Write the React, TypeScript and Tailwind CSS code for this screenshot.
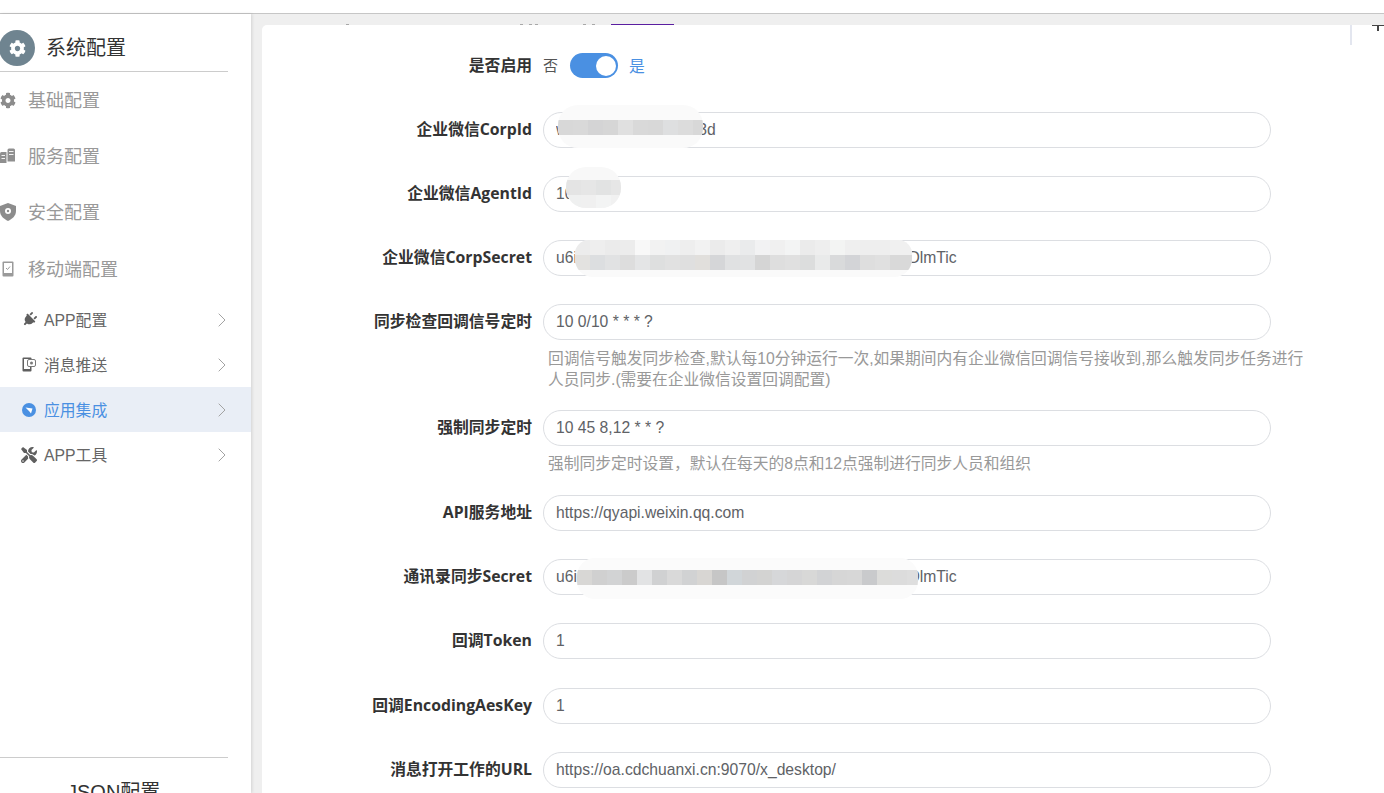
import React, { ReactNode } from "react";
import { FaCog, FaPlug, FaTools } from "react-icons/fa";

const ServerIcon = () => (
  <svg width="16" height="16" viewBox="0 0 16 16" fill="#8f8f8f">
    <path d="M0 5.5Q0 4 1.5 4H6.5V15H0z" />
    <path d="M7.5 2Q7.5 0.5 9 0.5H13.5Q15 0.5 15 2V13.5H7.5z" />
    <path d="M1.5 7h3.5v1H1.5zM1.5 10h3.5v1H1.5zM9 3h4.5v1H9zM9 6h4.5v1H9z" fill="#f2f2f2" />
  </svg>
);

const ShieldIcon = () => (
  <svg width="16" height="18" viewBox="0 0 16 18" fill="#8c8c8c">
    <path d="M8 0l8 3v5c0 5-4 8-8 10C4 16 0 13 0 8V3z" />
    <circle cx="8" cy="8" r="3" fill="#fff" />
    <circle cx="8" cy="8" r="1.2" />
  </svg>
);

const PhoneCheckIcon = () => (
  <svg width="12" height="16" viewBox="0 0 12 16" fill="none">
    <rect x="0.5" y="0.5" width="11" height="15" rx="1" fill="#9a9a9a" />
    <rect x="2" y="2" width="8" height="10" fill="#fff" />
    <path d="M4 7l1.5 1.5L8 5.5" stroke="#9a9a9a" />
  </svg>
);

const PushIcon = () => (
  <svg width="14" height="15" viewBox="0 0 14 15" fill="none">
    <rect x="0.5" y="0.5" width="9" height="14" rx="1" fill="#5f5f5f" />
    <rect x="2" y="2" width="6" height="10" fill="#fff" />
    <rect x="5.5" y="2.5" width="8" height="7" rx="1.5" fill="#fff" stroke="#7a7a7a" />
    <circle cx="9.5" cy="6" r="1.5" fill="#7a7a7a" />
  </svg>
);

const ArrowDiscIcon = () => (
  <svg width="14" height="14" viewBox="0 0 14 14">
    <circle cx="7" cy="7" r="7" fill="#4a90e2" />
    <path d="M3.5 4.5L10.5 5.5L9 10.5L7 8z" fill="#fff" />
  </svg>
);

const Chevron = () => (
  <svg width="8" height="14" viewBox="0 0 8 14" fill="none" stroke="#a3a3a3" strokeWidth="1">
    <path d="M0.7 0.7L7 7L0.7 13.3" />
  </svg>
);

const mainMenu: { icon: ReactNode; text: string; extra?: string }[] = [
  { icon: <FaCog size={17} color="#8c8c8c" />, text: "基础配置" },
  { icon: <ServerIcon />, text: "服务配置" },
  { icon: <ShieldIcon />, text: "安全配置" },
  { icon: <PhoneCheckIcon />, text: "移动端配置", extra: "mt-px" },
];

const subMenu: { icon: ReactNode; text: string; active?: boolean }[] = [
  { icon: <FaPlug size={15} color="#5f5f5f" className="rotate-45" />, text: "APP配置" },
  { icon: <PushIcon />, text: "消息推送" },
  { icon: <ArrowDiscIcon />, text: "应用集成", active: true },
  { icon: <FaTools size={16} color="#5f5f5f" />, text: "APP工具" },
];

const Mosaic = ({ colors }: { colors: string[] }) => (
  <div className="flex h-[15px]">
    {colors.map((c, i) => (
      <div key={i} className="w-[15px] h-full shrink-0" style={{ backgroundColor: c }} />
    ))}
  </div>
);

const Field = ({
  label,
  value,
  hint,
  cover,
  className,
}: {
  label: string;
  value: string;
  hint?: ReactNode;
  cover?: ReactNode;
  className?: string;
}) => (
  <div className={`flex ${className ?? ""}`}>
    <div className="w-[270px] h-9 shrink-0 flex items-center justify-end text-[15.8px] leading-none font-bold text-[#333] font-['Open_Sans','Noto_Sans_CJK_SC',sans-serif]">
      {label}
    </div>
    <div className="ml-[11px] w-[728px]">
      <div className="relative h-9">
        <input
          readOnly
          value={value}
          className="w-full h-9 px-3 rounded-[18px] border border-[#dcdee2] text-[15.7px] text-[#606266] outline-none bg-white"
        />
        {cover}
      </div>
      {hint}
    </div>
  </div>
);

const lightRowA = ["#ececec", "#eeeeee", "#ebebeb", "#ececec", "#f8f8f8", "#f2f2f2", "#f0f1f2", "#eeeeee", "#f2f2f2", "#ebebeb", "#efefef", "#eaebec", "#f2f2f3", "#f0f0f0", "#f3f4f4", "#ebebeb", "#eeeeee", "#f3f4f3", "#efefef", "#eeeeee", "#eeeeee", "#f0f0f0", "#f0f0f0"];
const lightRowB = ["#e3e2e0", "#dcdee0", "#e1e2e3", "#dddddd", "#e4e5e6", "#dedfdf", "#e1e1e1", "#dfdfdf", "#e1dfdc", "#d5d6d8", "#e0e1e2", "#e1e2e3", "#d5d5d5", "#dedede", "#e0e0e0", "#dcdddd", "#e9eaea", "#d9dadb", "#d3d4d7", "#dedede", "#e0e0e0", "#d9d9d9", "#d9d9d9"];
const darkRow = ["#d8d7d5", "#d0d0d0", "#d2d3d4", "#cbcbcb", "#e2e3e4", "#d0d1d2", "#d9d9d9", "#d1d2d3", "#d8d6d3", "#c6c6c6", "#d1d6d9", "#d1d2d3", "#d3d3d2", "#d6d7d9", "#d5d5d6", "#d8d8d7", "#d2d3d5", "#d6d6d6", "#d7d7d7", "#c9cacc", "#dcdcda", "#dcdcdc", "#dedede"];

const secretValue = "u6i" + "0".repeat(38) + "DlmTic";

const topMarks = ["left-[84px]", "left-[258px]", "left-[267px]", "left-[273px]", "left-[321px]", "left-[330px]"];

export default function App() {
  return (
    <div className="w-[1384px] h-[793px] overflow-hidden flex flex-col bg-white font-['Liberation_Sans','Noto_Sans_CJK_SC',sans-serif]">
      <div className="h-[14px] shrink-0 border-b border-[#c6c6c6] bg-white" />
      <div className="flex flex-1 min-h-0 bg-[#efefef]">
        <aside className="w-[251px] shrink-0 bg-white flex flex-col shadow-[1px_0_3px_rgba(0,0,0,0.12)] z-10 overflow-hidden">
          <div className="h-[58px] w-[228px] shrink-0 flex items-end pb-[5px] border-b border-[#cccccc]">
            <div className="-ml-[1px] w-9 h-9 rounded-full bg-[#6f8490] flex items-center justify-center">
              <FaCog size={17} color="#fff" />
            </div>
            <span className="ml-[11px] h-9 flex items-center text-[20px] text-[#333]">系统配置</span>
          </div>
          {mainMenu.map((m) => (
            <div key={m.text} className={`h-14 shrink-0 flex items-center text-[18px] text-[#999] ${m.extra ?? ""}`}>
              <div className="w-4 flex justify-center">{m.icon}</div>
              <span className="ml-3 pt-0.5">{m.text}</span>
            </div>
          ))}
          {subMenu.map((s) => (
            <div
              key={s.text}
              className={`h-[45px] shrink-0 flex items-center pl-[21px] pr-[25px] text-[15.8px] ${
                s.active ? "bg-[#e9eef6] text-[#4a90e2]" : "text-[#666]"
              }`}
            >
              <div className="w-4 flex justify-center">{s.icon}</div>
              <span className="ml-[7px] pt-0.5">{s.text}</span>
              <div className="ml-auto flex">
                <Chevron />
              </div>
            </div>
          ))}
          <div className="mt-auto w-[228px] h-[36px] shrink-0 border-t border-[#cccccc] pl-[67px] pt-[22px] text-[20px] leading-[24px] text-[#333]">
            JSON配置
          </div>
        </aside>

        <main className="flex-1 min-w-0 pl-[11px] pt-[11px] flex flex-col overflow-hidden">
          <div className="relative flex-1 bg-white rounded-tl-[5px] flex flex-col gap-7 pt-7">
            {topMarks.map((m) => (
              <div key={m} className={`absolute ${m} -top-px w-[3px] h-px bg-[#a8a8a8]`} />
            ))}
            <div className="absolute left-[349px] -top-px w-[63px] h-px bg-[#5a1ea0]" />
            <div className="absolute left-[1088px] top-0 w-[2px] h-5 bg-[#e3e6ef]" />
            <div className="absolute left-[1110px] top-0 w-3 h-px bg-[#444]" />
            <div className="absolute left-[1115px] top-0 w-[2px] h-[6px] bg-[#444]" />

            <div className="flex h-[25px] items-center mb-[6px]">
              <div className="w-[270px] text-right text-[15.8px] leading-none font-bold text-[#333] font-['Open_Sans','Noto_Sans_CJK_SC',sans-serif]">
                是否启用
              </div>
              <span className="ml-[11px] pt-0.5 text-[15px] text-[#555]">否</span>
              <div className="ml-3 w-12 h-[25px] rounded-full bg-[#4a90e2] flex items-center justify-end pr-[2px]">
                <div className="w-[20px] h-[20px] rounded-full bg-white" />
              </div>
              <span className="ml-[11px] pt-0.5 text-[15.8px] text-[#4a90e2]">是</span>
            </div>

            <Field
              label="企业微信CorpId"
              value={"w" + "0".repeat(15) + "3d"}
              cover={
                <div className="absolute left-[15px] -top-[7px] w-[145px] h-[43px] rounded-[20px] bg-[#fafafa] pt-[15px] overflow-hidden">
                  <Mosaic colors={["#d8d8d8", "#d9d9d9", "#d4d4d5", "#d6d6d6", "#e0e0e0", "#d9d9d9", "#d8d8d8", "#dedfe0", "#dcdcdc", "#d8d8d8"]} />
                </div>
              }
            />
            <Field
              label="企业微信AgentId"
              value="10000"
              cover={
                <div className="absolute left-[23px] -top-[9px] w-[55px] h-[41px] rounded-[20px] bg-[#f8f8f8] pt-[13px] overflow-hidden">
                  <Mosaic colors={["#e4e4e4", "#e6e6e6", "#e2e3e3", "#e6e6e6"]} />
                  <Mosaic colors={["#eff0f0", "#f0f0f0", "#f3f4f4", "#f1f1f1"]} />
                </div>
              }
            />
            <Field
              label="企业微信CorpSecret"
              value={secretValue}
              cover={
                <div className="absolute left-[32px] top-0 w-[337px] h-[37px] rounded-t-[14px] rounded-b-[18px] bg-[#fafafa] overflow-hidden">
                  <Mosaic colors={lightRowA} />
                  <Mosaic colors={lightRowB} />
                </div>
              }
            />
            <Field
              label="同步检查回调信号定时"
              value="10 0/10 * * * ?"
              hint={
                <div className="ml-[5px] mt-2 w-[760px] text-[15.75px] leading-[21px] text-[#999] mb-[-8px]">
                  回调信号触发同步检查,默认每10分钟运行一次,如果期间内有企业微信回调信号接收到,那么触发同步任务进行人员同步.(需要在企业微信设置回调配置)
                </div>
              }
            />
            <Field
              label="强制同步定时"
              value="10 45 8,12 * * ?"
              hint={
                <div className="ml-[5px] mt-[7px] text-[15.75px] leading-[21px] text-[#999] mb-[-7px]">
                  强制同步定时设置，默认在每天的8点和12点强制进行同步人员和组织
                </div>
              }
            />
            <Field label="API服务地址" value="https://qyapi.weixin.qq.com" />
            <Field
              label="通讯录同步Secret"
              value={secretValue}
              cover={
                <div className="absolute left-[34px] -top-[1px] w-[341px] h-[41px] rounded-[18px] bg-[#fbfbfb] pt-[12px] overflow-hidden">
                  <Mosaic colors={darkRow} />
                </div>
              }
            />
            <Field label="回调Token" value="1" />
            <Field label="回调EncodingAesKey" value="1" className="mt-px" />
            <Field label="消息打开工作的URL" value="https://oa.cdchuanxi.cn:9070/x_desktop/" />
          </div>
        </main>
      </div>
    </div>
  );
}
